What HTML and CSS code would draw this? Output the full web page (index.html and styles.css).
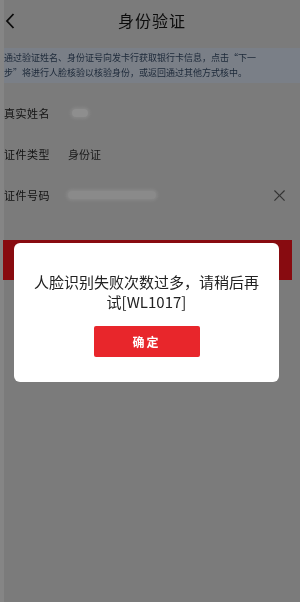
FILE: index.html
```html
<!DOCTYPE html>
<html lang="zh-CN">

<head>
    <meta charset="UTF-8">
    <meta name="viewport" content="width=device-width, initial-scale=1.0">
    <title>身份验证</title>
    <link rel="stylesheet" href="styles.css">
</head>

<body>
<!-- 页面（已被遮罩压暗） -->
<div class="page">
    <!-- 顶部栏 -->
    <div class="header">
        <span class="back">
            <svg width="10" height="16" viewBox="0 0 10 16"><path d="M8.5 1 L2 8 L8.5 15" fill="none" stroke="#0c0c0c" stroke-width="1.8"/></svg>
        </span>
        <span class="title">身份验证</span>
    </div>

    <!-- 提示 -->
    <div class="tip">通过验证姓名、身份证号向发卡行获取银行卡信息，点击“下一步”将进行人脸核验以核验身份，或返回通过其他方式核中。</div>

    <!-- 表单 -->
    <div class="form">
        <div class="row">
            <span class="label">真实姓名</span>
            <span class="blur short"></span>
        </div>
        <div class="row">
            <span class="label">证件类型</span>
            <span class="value">身份证</span>
        </div>
        <div class="row">
            <span class="label">证件号码</span>
            <span class="blur long"></span>
            <span class="clear">&times;</span>
        </div>
    </div>

    <div class="next-btn"></div>

    <!-- 弹窗 -->
    <div class="dialog">
        <p class="msg">人脸识别失败次数过多，请稍后再试[WL1017]</p>
        <div class="ok">确定</div>
    </div>
</div>
</body>

</html>
```

FILE: styles.css
```css
html {
    background-color: #7b7b7b;
}

body {
    margin: 0;
    padding: 0;
    font-family: "Noto Sans CJK SC", "Liberation Sans", sans-serif;
    background-color: #7b7b7b;
    color: #111;
}

.page {
    position: relative;
    height: 602px;
    border-left: 4px solid #858585;
    background-color: #7b7b7b;
    will-change: transform;
}

/* 顶部栏 */
.header {
    position: relative;
    height: 40px;
    display: flex;
    align-items: center;
    justify-content: center;
}

.back {
    position: absolute;
    left: 1px;
    top: 10px;
}

.title {
    font-size: 16px;
    color: #0c0c0c;
    letter-spacing: 1px;
}

/* 提示 */
.tip {
    margin-top: 8px;
    padding: 2px 38px 3px 0;
    font-size: 9px;
    line-height: 15px;
    color: #1c2838;
    background-color: #7a7f87;
}

/* 表单 */
.form {
    padding-top: 9px;
}

.row {
    display: flex;
    align-items: center;
    height: 41px;
    font-size: 11px;
}

.label {
    width: 64px;
    color: #121212;
    letter-spacing: 0.5px;
}

.value {
    color: #1a1a1a;
}

.blur {
    display: block;
    height: 8px;
    background-color: #8e8e8e;
    border-radius: 4px;
    box-shadow: 0 0 3px 2px #868686;
}

.blur.short {
    width: 16px;
    margin-left: 4px;
}

.blur.long {
    width: 88px;
    background-color: #8a8a8a;
}

.clear {
    margin-left: auto;
    margin-right: 12px;
    font-size: 17px;
    color: #333;
}

.next-btn {
    margin: 25px 8px 0 -1px;
    height: 40px;
    background-color: #880b10;
}

/* 弹窗 */
.dialog {
    position: absolute;
    left: 10px;
    top: 243px;
    width: 265px;
    box-sizing: border-box;
    padding: 29px 20px 25px;
    background-color: #fff;
    border-radius: 6px;
    text-align: center;
}

.msg {
    margin: 0;
    font-size: 15px;
    line-height: 20px;
    color: #222;
}

.ok {
    margin: 14px auto 0;
    width: 106px;
    height: 31px;
    line-height: 31px;
    background-color: #e8262b;
    border-radius: 2px;
    color: #fff;
    font-size: 12px;
    font-weight: bold;
    letter-spacing: 2px;
}
```
